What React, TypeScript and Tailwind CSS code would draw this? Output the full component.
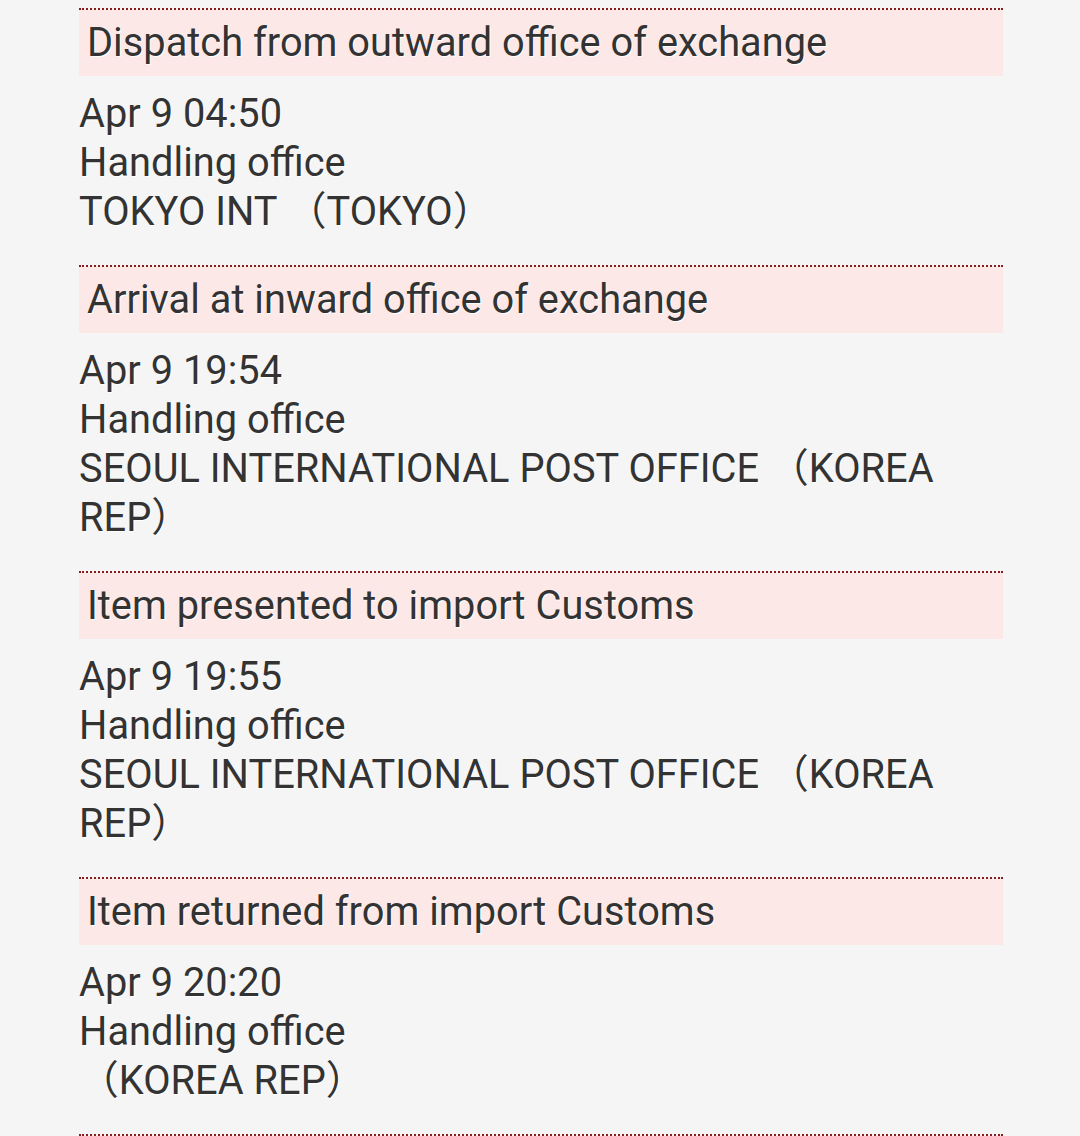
const events = [
  {
    title: "Dispatch from outward office of exchange",
    date: "Apr 9 04:50",
    office: "TOKYO INT （TOKYO）",
  },
  {
    title: "Arrival at inward office of exchange",
    date: "Apr 9 19:54",
    office: "SEOUL INTERNATIONAL POST OFFICE （KOREA REP）",
  },
  {
    title: "Item presented to import Customs",
    date: "Apr 9 19:55",
    office: "SEOUL INTERNATIONAL POST OFFICE （KOREA REP）",
  },
  {
    title: "Item returned from import Customs",
    date: "Apr 9 20:20",
    office: "（KOREA REP）",
  },
];

const App = () => {
  return (
    <div
      className="min-h-screen bg-[#f5f5f5] text-[#333333] pt-2 pl-[79px] pr-[77px] pb-10 [text-spacing-trim:space-all]"
      style={{ fontFamily: 'Roboto, "Noto Sans CJK JP", sans-serif' }}
    >
      {events.map((e, i) => (
        <div key={i} className="border-t-2 border-dotted border-[#8b1a1a]">
          <div className="h-[66px] flex items-center bg-[#fde8e8] px-[8px] text-[39.8px] [text-shadow:1px_1px_0_#fff]">
            {e.title}
          </div>
          <div className="mt-[13px] mb-[29px] text-[39.8px] leading-[49px] [text-shadow:1px_1px_0_#fff]">
            <div>{e.date}</div>
            <div>Handling office</div>
            <div>{e.office}</div>
          </div>
        </div>
      ))}
      <div className="border-t-2 border-dotted border-[#8b1a1a]" />
    </div>
  );
};

export default App;
